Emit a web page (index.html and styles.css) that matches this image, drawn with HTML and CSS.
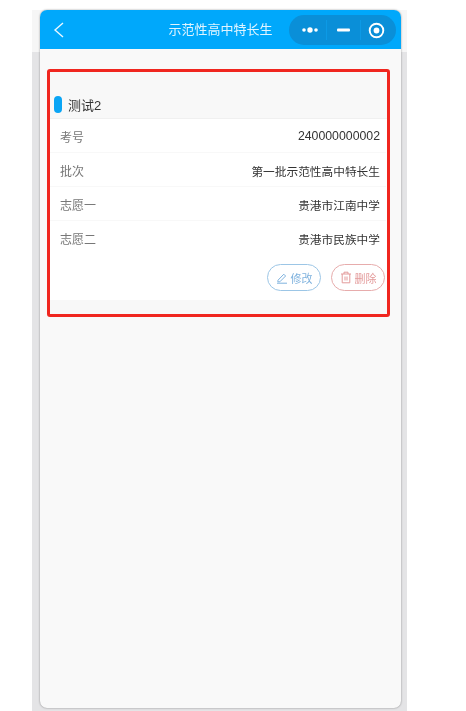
FILE: index.html
```html
<!DOCTYPE html>
<html lang="zh-CN">
<head>
    <meta charset="UTF-8">
    <title>示范性高中特长生</title>
    <link rel="stylesheet" href="styles.css">
</head>
<body>
    <div class="backdrop">
        <div class="window">
            <div class="navbar">
                <svg class="back" width="12" height="18" viewBox="0 0 12 18"><path d="M10 2 L2 9 L10 16" fill="none" stroke="#e6f6ff" stroke-width="1.4"/></svg>
                <div class="nav-title">示范性高中特长生</div>
                <div class="capsule">
                    <div class="cap-item cap-more">
                        <svg width="16" height="6" viewBox="0 0 16 6"><circle cx="2" cy="3" r="1.8" fill="#fff"/><circle cx="8" cy="3" r="2.7" fill="#fff"/><circle cx="14" cy="3" r="1.8" fill="#fff"/></svg>
                    </div>
                    <div class="cap-item cap-min">
                        <svg width="13" height="4" viewBox="0 0 13 4"><rect y="0.5" width="13" height="3" rx="1" fill="#fff"/></svg>
                    </div>
                    <div class="cap-item cap-close">
                        <svg width="17" height="17" viewBox="0 0 17 17"><circle cx="8.5" cy="8.5" r="6.8" fill="none" stroke="#fff" stroke-width="1.9"/><circle cx="8.5" cy="8.5" r="2.9" fill="#fff"/></svg>
                    </div>
                </div>
            </div>
            <div class="content">
                <div class="card">
                    <div class="card-head">
                        <span class="mark"></span>
                        <span class="name">测试2</span>
                    </div>
                    <div class="card-body">
                        <div class="row"><span class="label">考号</span><span class="value number">240000000002</span></div>
                        <div class="row"><span class="label">批次</span><span class="value">第一批示范性高中特长生</span></div>
                        <div class="row"><span class="label">志愿一</span><span class="value">贵港市江南中学</span></div>
                        <div class="row"><span class="label">志愿二</span><span class="value">贵港市民族中学</span></div>
                        <div class="actions">
                            <div class="btn btn-edit">
                                <svg width="12" height="12" viewBox="0 0 12 12"><path d="M2 8.2 L7.8 2.2 L9.6 4 L3.8 9.8 L1.8 9.8 Z M1 11.2 H11" fill="none" stroke="#7fb2de" stroke-width="1"/></svg>
                                修改
                            </div>
                            <div class="btn btn-del">
                                <svg width="12" height="13" viewBox="0 0 12 13"><path d="M1 3 H11 M4 3 V1.2 H8 V3 M2.2 3 V11.8 H9.8 V3 M5 5.5 V9.5 M7 5.5 V9.5" fill="none" stroke="#e39a9a" stroke-width="1"/></svg>
                                删除
                            </div>
                        </div>
                    </div>
                </div>
            </div>
        </div>
    </div>
</body>
</html>
```

FILE: styles.css
```css
html, body {
    margin: 0;
    height: 711px;
    overflow: hidden;
    background: #fff;
    font-family: "Liberation Sans", "Noto Sans CJK SC", sans-serif;
}
.backdrop {
    box-sizing: border-box;
    width: 375px;
    height: 711px;
    margin-left: 32px;
    padding: 10px 0 0 8px;
    background: linear-gradient(#fff 0, #fff 10px, #f6f6f6 10px, #f6f6f6 52px, #e4e4e6 52px);
    filter: blur(0.4px);
}
.window {
    display: flex;
    flex-direction: column;
    width: 361px;
    height: 698px;
    overflow: hidden;
    border-radius: 7px;
    background: #f9f9f9;
    box-shadow: 0 0 2px rgba(0,0,0,0.45);
}
.navbar {
    position: relative;
    display: flex;
    align-items: center;
    justify-content: center;
    flex: 0 0 39px;
    background: #00a8fb;
}
.back {
    position: absolute;
    left: 13px;
    top: 11px;
}
.nav-title {
    width: 360px;
    padding-bottom: 2px;
    text-align: center;
    color: #dff4ff;
    font-size: 13px;
}
.capsule {
    position: absolute;
    left: 249px;
    top: 5px;
    display: flex;
    align-items: center;
    width: 107px;
    height: 30px;
    border-radius: 15px;
    background: #0a8fd8;
}
.cap-item {
    display: flex;
    align-items: center;
    justify-content: center;
    box-sizing: border-box;
    height: 20px;
    border-left: 1px solid #0c9ae6;
}
.cap-more {
    width: 37px;
    padding-left: 4px;
    border-left: none;
}
.cap-min {
    width: 34px;
}
.cap-close {
    width: 36px;
    padding-right: 5px;
}
.content {
    flex: 1;
    padding: 20px 11px 0 7px;
}
.card {
    height: 248px;
    box-sizing: border-box;
    border: 3px solid #f0261f;
    border-radius: 3px;
    background: #f8f8f8;
}
.card-head {
    display: flex;
    align-items: center;
    gap: 6px;
    height: 46px;
    padding: 18px 0 0 4px;
    box-sizing: border-box;
}
.mark {
    width: 8px;
    height: 17px;
    border-radius: 4px;
    background: #0aa5f5;
}
.name {
    font-size: 13px;
    color: #333;
}
.card-body {
    height: 182px;
    box-sizing: border-box;
    padding-right: 1px;
    background: #fff;
    border-top: 1px solid #f0f0f0;
}
.row {
    display: flex;
    align-items: center;
    justify-content: space-between;
    height: 34px;
    box-sizing: border-box;
    padding: 1px 6px 0 10px;
    font-size: 12px;
    border-bottom: 1px solid #f8f8f8;
}
.row:nth-child(4) {
    border-bottom-color: transparent;
}
.label {
    color: #777;
}
.value {
    color: #333;
    font-size: 11.7px;
}
.number {
    font-size: 12.3px;
}
.actions {
    display: flex;
    justify-content: flex-end;
    gap: 10px;
    margin-top: 9px;
    padding-right: 1px;
}
.btn {
    display: flex;
    align-items: center;
    justify-content: center;
    gap: 3px;
    box-sizing: border-box;
    width: 54px;
    height: 27px;
    border-radius: 14px;
    font-size: 11px;
    background: #fff;
}
.btn-edit {
    border: 1px solid #9cc6e6;
    color: #7fb2de;
}
.btn-del {
    border: 1px solid #e7acac;
    color: #e39a9a;
}
```
